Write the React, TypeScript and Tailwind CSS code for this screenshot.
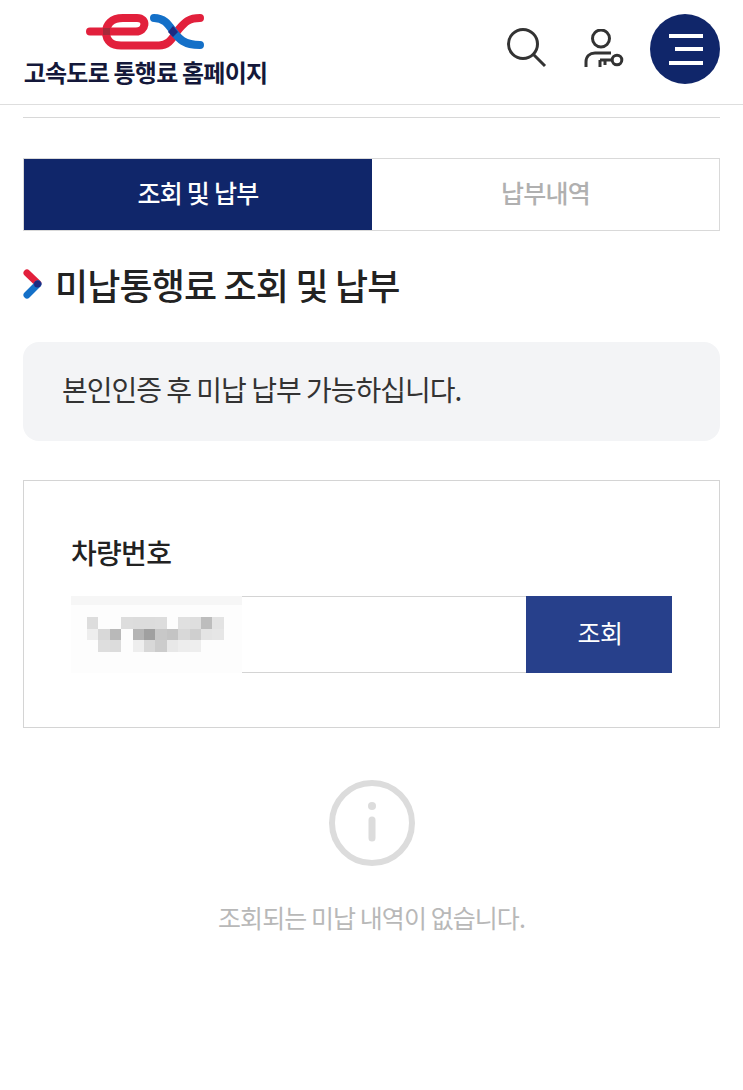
const MASK_ROWS = [
  ["bg-[#dddddd]", "", "", "bg-[#dddddd]", "bg-[#dcdcdc]", "bg-[#dcdcdc]", "bg-[#dddddd]", "", "bg-[#e0e0e0]", "bg-[#dedede]", "bg-[#bdbdbd]", "bg-[#e3e3e3]"],
  ["bg-[#eeeeee]", "bg-[#d8d8d8]", "bg-[#b9b9b9]", "", "bg-[#b4b4b4]", "bg-[#a0a0a0]", "bg-[#c8c8c8]", "bg-[#c4c4c4]", "bg-[#d8d8d8]", "bg-[#cfcfcf]", "bg-[#e4e4e4]", "bg-[#e6e6e6]"],
  ["", "bg-[#dedede]", "bg-[#dcdcdc]", "", "bg-[#eeeeee]", "bg-[#d8d8d8]", "bg-[#cccccc]", "bg-[#e8e8e8]", "bg-[#ededed]", "bg-[#eeeeee]", "", ""],
];

function Logo() {
  return (
    <svg width="120" height="40" viewBox="0 0 120 40" fill="none" strokeLinecap="round">
      <path d="M4 18.500 H50 C60 18.500 62 5 51 5 H37 C25 5 20 12 20 19 C20 28 26 32.500 35 32.500 H73 C84 32.500 87 23 93 16 C99 9 103 5 114 5" stroke="#e2203c" strokeWidth="8" />
      <path d="M68 5 C78 5 82 11 87 18 C93 26 98 32 114 32" stroke="#1470c8" strokeWidth="8" />
      <path d="M87 13 L82 19 L87 24 L92 19 Z" fill="#1c2a80" />
      <rect x="17" y="15" width="7" height="7" fill="#a52a3a" />
    </svg>
  );
}

function UserKeyIcon() {
  return (
    <svg width="40" height="40" viewBox="0 0 40 40" fill="none" stroke="#333" strokeWidth="3">
      <circle cx="17" cy="9.500" r="8.500" />
      <path d="M2 38 V33 C2 27 6 24 11 24 H27" />
      <circle cx="33" cy="31" r="4.800" />
      <path d="M16 31 H28 M16 31 V38 M21 31 V36" />
    </svg>
  );
}

function App() {
  return (
    <div className="min-h-[1090px] w-full bg-white font-['Noto_Sans_CJK_KR','Noto_Sans',sans-serif] text-[#222]">
      <header className="flex h-[105px] items-start justify-between border-b border-[#dedede] pl-6 pr-[23px]">
        <div className="flex w-[243px] flex-col items-center pt-[13px]">
          <div className="h-[40px]">
            <Logo />
          </div>
          <div className="mt-[2px] whitespace-nowrap text-[24px] font-bold leading-[34px] tracking-[-0.8px] text-[#14183a]">
            고속도로 통행료 홈페이지
          </div>
        </div>
        <div className="flex items-center pt-[14px]">
          <svg width="42" height="42" viewBox="0 0 42 42" fill="none" stroke="#333" strokeWidth="3" className="mb-[2px]">
            <circle cx="18" cy="17" r="14.500" />
            <path d="M28.500 27.500 L40 39" />
          </svg>
          <div className="ml-[37px]">
            <UserKeyIcon />
          </div>
          <button className="ml-[26px] flex h-[70px] w-[70px] flex-col items-end justify-center gap-[9.500px] rounded-full bg-[#10266a] pr-[17px]">
            <span className="h-[4px] w-[34px] bg-white" />
            <span className="h-[4px] w-[28px] bg-white" />
            <span className="h-[4px] w-[34px] bg-white" />
          </button>
        </div>
      </header>

      <main className="px-[23px]">
        <hr className="mt-3 border-[#d8d8d8]" />

        <div className="mt-10 flex h-[73px] border border-[#d9d9d9] text-[25px] tracking-[-0.75px]">
          <div className="flex w-[348px] items-center justify-center bg-[#10266a] pb-1 font-medium text-white">조회 및 납부</div>
          <div className="flex flex-1 items-center justify-center bg-white pb-1 font-medium text-[#b0b0b0]">납부내역</div>
        </div>

        <div className="mt-[28px] flex h-[50px] items-center">
          <svg width="20" height="30" viewBox="0 0 20 30" fill="none" strokeLinecap="round" strokeWidth="7">
            <path d="M4 4 L15 14.500" stroke="#e2203c" />
            <path d="M15 15 L4 26" stroke="#1470c8" />
            <circle cx="14.500" cy="15" r="3.500" fill="#1c2a80" stroke="none" />
          </svg>
          <h1 className="ml-[12px] text-[36px] font-medium leading-[50px] tracking-[-0.85px] text-[#222]">미납통행료 조회 및 납부</h1>
        </div>

        <div className="mt-[33px] flex h-[99px] items-center rounded-2xl bg-[#f3f4f6] pb-[5px] pl-[39px] text-[28px] tracking-[-1px] text-[#333]">
          본인인증 후 미납 납부 가능하십니다.
        </div>

        <section className="mt-[39px] h-[248px] border border-[#d4d4d4] px-[47px] pt-[50px]">
          <label className="block text-[28px] font-medium leading-[42px] tracking-[-0.7px] text-[#222]">차량번호</label>
          <div className="mt-[23px] flex h-[77px]">
            <div className="relative flex-1 border-y border-[#d4d4d4]">
              <div className="absolute -top-px left-0 h-[77px] w-[171px] bg-[#fdfdfd] pl-[16px] pt-[21px]">
                <div className="absolute left-0 top-0 h-[9px] w-full bg-[#f6f6f6]" />
                {MASK_ROWS.map((row, i) => (
                  <div key={i} className="flex">
                    {row.map((color, j) => (
                      <span key={j} className={`h-[11.500px] w-[11.400px] ${color}`} />
                    ))}
                  </div>
                ))}
              </div>
            </div>
            <button className="w-[146px] bg-[#27408b] pb-1 pl-[2px] text-[25px] tracking-[-0.5px] text-white">조회</button>
          </div>
        </section>

        <div className="mt-[51px] flex flex-col items-center">
          <svg width="88" height="88" viewBox="0 0 88 88" fill="none">
            <circle cx="44" cy="44" r="40" stroke="#dcdcdc" strokeWidth="6" />
            <circle cx="44" cy="27" r="4" fill="#dcdcdc" />
            <path d="M44 41 V59" stroke="#dcdcdc" strokeWidth="7" strokeLinecap="round" />
          </svg>
          <p className="mt-[31px] text-[25px] leading-[38px] tracking-[-0.93px] text-[#b8b8b8]">조회되는 미납 내역이 없습니다.</p>
        </div>
      </main>
    </div>
  );
}

export default App;
